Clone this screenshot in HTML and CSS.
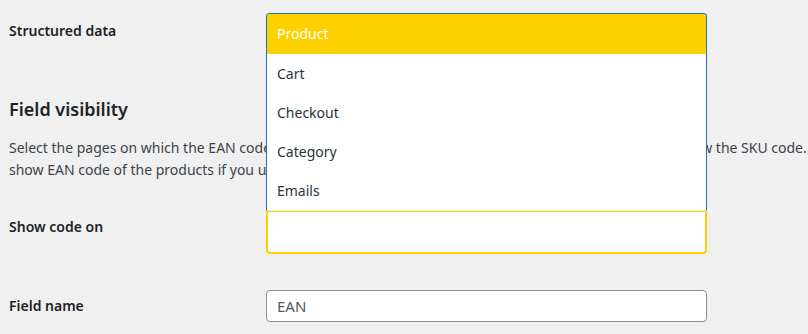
FILE: index.html
```html
<!DOCTYPE html>
<html lang="en">
<head>
<meta charset="utf-8">
<title>EAN settings</title>
<link rel="stylesheet" href="styles.css">
</head>
<body>
<div class="page">
  <div class="row row-structured">
    <div class="label">Structured data</div>
    <div class="field">
      <div class="box box-plain"></div>
    </div>
  </div>

  <h2 class="heading">Field visibility</h2>
  <p class="desc">
    <span class="line">Select the pages on which the EAN code should be visible. On the product page the code is displayed below the SKU code.</span>
    <span class="line">show EAN code of the products if you use structured data or other integrations.</span>
  </p>

  <div class="row row-show">
    <div class="label">Show code on</div>
    <div class="field select-wrap">
      <ul class="dropdown">
        <li class="option option-active">Product</li>
        <li class="option">Cart</li>
        <li class="option">Checkout</li>
        <li class="option">Category</li>
        <li class="option">Emails</li>
      </ul>
      <div class="box box-focus"></div>
    </div>
  </div>

  <div class="row row-name">
    <div class="label">Field name</div>
    <div class="field">
      <div class="input">EAN</div>
    </div>
  </div>
</div>
</body>
</html>
```
FILE: styles.css
```css
html, body {
  margin: 0;
  padding: 0;
  background: #f0f0f1;
}
body {
  font-family: "Noto Sans", "Open Sans", sans-serif;
  color: #1d2327;
  overflow: hidden;
  width: 808px;
  height: 334px;
}
.page {
  padding: 13px 0 0 9px;
}
.row {
  display: grid;
  grid-template-columns: 257px 441px;
  align-items: start;
}
.label {
  font-size: 14px;
  font-weight: 600;
  line-height: 20px;
  color: #1d2327;
}
.row-structured .label { margin-top: 8px; }
.box {
  box-sizing: border-box;
  background: #fff;
}
.box-plain {
  height: 40px;
  border: 1px solid #8c8f94;
  border-radius: 4px;
}
.heading {
  margin: 43px 0 0;
  font-size: 18px;
  line-height: 26px;
  font-weight: 600;
  color: #1d2327;
}
.desc {
  margin: 15px 0 0;
  font-size: 14px;
  line-height: 22px;
  color: #3c434a;
  white-space: nowrap;
}
.line { display: block; }
.row-show { margin-top: 29px; }
.row-show .label { margin-top: 7px; }
.select-wrap { position: relative; }
.box-focus {
  height: 44px;
  border: 2px solid #ffd000;
  border-radius: 0 0 4px 4px;
}
.dropdown {
  position: absolute;
  left: 0;
  right: 0;
  bottom: calc(100% - 1px);
  margin: 0;
  padding: 0;
  list-style: none;
  background: #fff;
  border: 1px solid #2271b1;
  border-bottom-color: #e1edf5;
  border-radius: 4px 4px 0 0;
  z-index: 2;
  overflow: hidden;
}
.option {
  height: 39px;
  line-height: 39px;
  padding: 0 10px;
  font-size: 14px;
  color: #2c3338;
}
.option-active {
  height: 40px;
  line-height: 40px;
  background: #ffd000;
  color: #fff;
}
.row-name { margin-top: 36px; }
.row-name .label { margin-top: 6px; }
.input {
  box-sizing: border-box;
  height: 32px;
  border: 1px solid #8c8f94;
  border-radius: 4px;
  background: #fff;
  padding: 0 10px;
  font-size: 15px;
  line-height: 30px;
  color: #50575e;
}
```
